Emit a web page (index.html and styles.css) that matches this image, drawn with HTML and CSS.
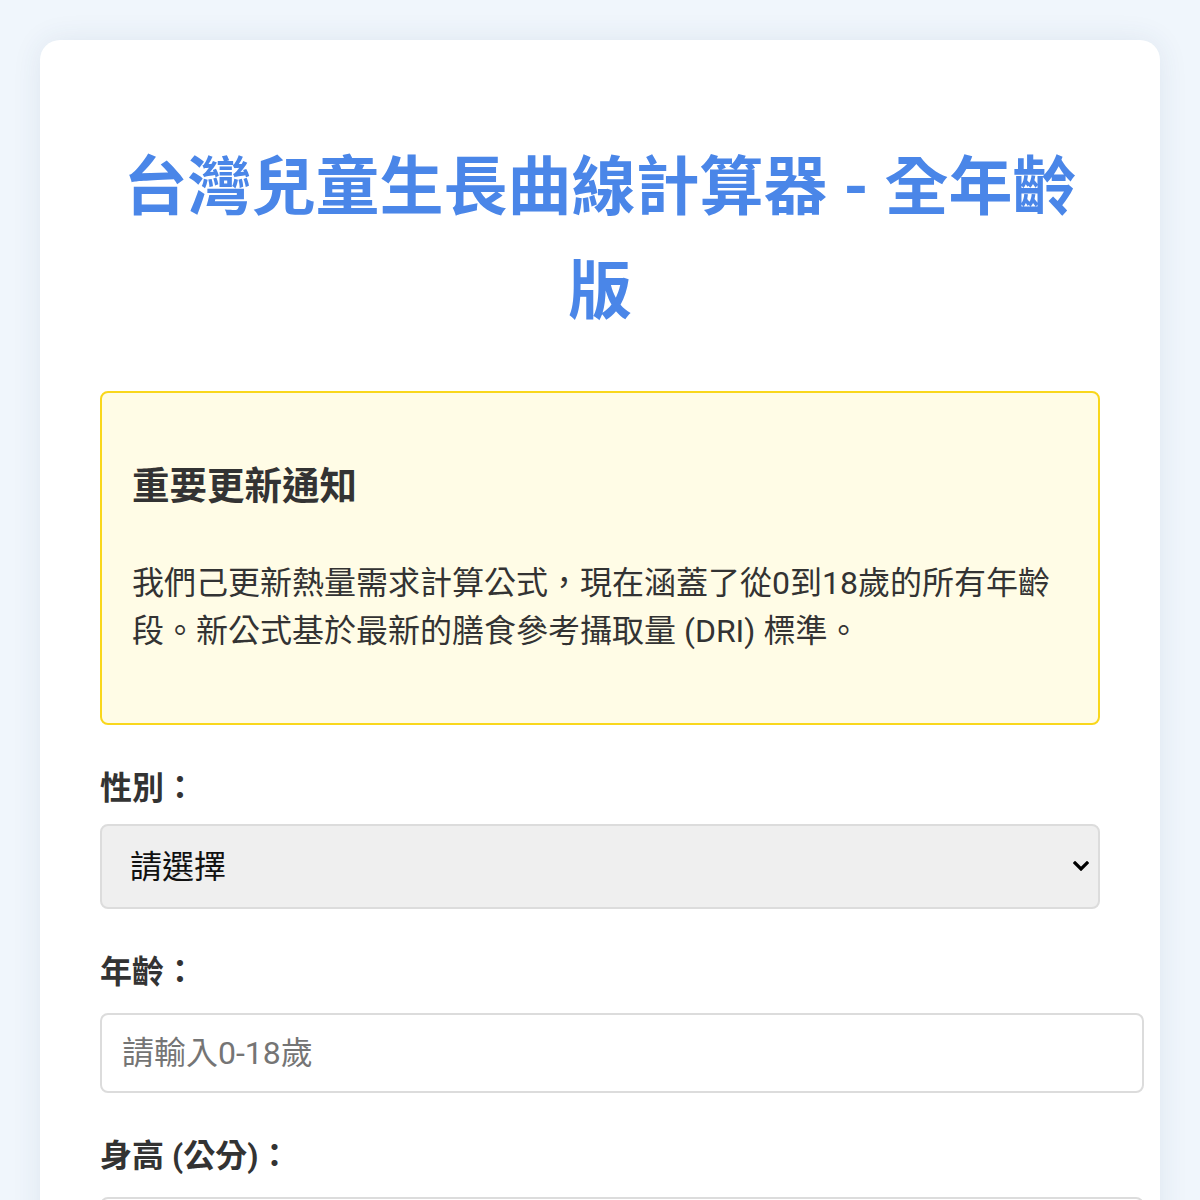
FILE: index.html
```html
<!DOCTYPE html>
<html lang="zh-Hant">
<head>
<meta charset="utf-8">
<title>台灣兒童生長曲線計算器 - 全年齡版</title>
<link rel="stylesheet" href="styles.css">
</head>
<body>
<div class="card">
  <h1 class="title">台灣兒童生長曲線計算器 - 全年齡版</h1>
  <div class="notice">
    <h3 class="notice-title">重要更新通知</h3>
    <p class="notice-text">我們己更新熱量需求計算公式，現在涵蓋了從0到18歲的所有年齡段。新公式基於最新的膳食參考攝取量 (DRI) 標準。</p>
  </div>
  <div class="group">
    <label class="label" for="gender">性別：</label>
    <div class="select-wrap">
      <select id="gender" class="select">
        <option>請選擇</option>
        <option>男</option>
        <option>女</option>
      </select>
      <svg class="chevron" width="16" height="10" viewBox="0 0 16 10"><path d="M2 2 L8 8 L14 2" fill="none" stroke="#000" stroke-width="3.2" stroke-linecap="square"/></svg>
    </div>
  </div>
  <div class="group">
    <label class="label" for="age">年齡：</label>
    <input id="age" class="input" type="text" placeholder="請輸入0-18歲">
  </div>
  <div class="group">
    <label class="label" for="height">身高 (公分)：</label>
    <input id="height" class="input" type="text" placeholder="請輸入身高">
  </div>
</div>
</body>
</html>
```
FILE: styles.css
```css
html, body {
  margin: 0;
  padding: 0;
}
body {
  background: #f0f6fc;
  padding: 40px;
  font-family: Roboto, "Noto Sans CJK JP", "Noto Sans CJK TC", sans-serif;
  color: #333;
}
.card {
  background: #fff;
  border-radius: 20px;
  box-shadow: 0 0 30px rgba(40, 70, 110, 0.09);
  padding: 60px;
  min-height: 1200px;
}
.title {
  margin: 36px 0 47px;
  font-size: 64px;
  line-height: 104px;
  font-weight: 700;
  color: #4a86e8;
  text-align: center;
}
.notice {
  background: #fffce6;
  border: 2px solid #f9d71c;
  border-radius: 8px;
  padding: 30px;
}
.notice-title {
  margin: 40px 0 50px;
  font-size: 37.5px;
  line-height: 46px;
  font-weight: 700;
  color: #333;
}
.notice-text {
  margin: 0 0 38px;
  font-size: 32px;
  line-height: 48px;
  color: #333;
}
.group {
  display: flex;
  flex-direction: column;
  align-items: flex-start;
  margin-top: 44px;
}
.label {
  display: block;
  font-size: 32px;
  line-height: 38px;
  font-weight: 700;
  color: #333;
  margin-bottom: 17px;
}
.select-wrap {
  position: relative;
  align-self: stretch;
}
.select {
  display: block;
  width: 100%;
  height: 85px;
  box-sizing: border-box;
  -webkit-appearance: none;
  appearance: none;
  background: #efefef;
  border: 2px solid #dcdcdc;
  border-radius: 8px;
  padding: 0 28px;
  font-family: inherit;
  font-size: 32px;
  color: #111;
  margin: 0;
}
.chevron {
  position: absolute;
  right: 11px;
  top: 37px;
}
.input {
  display: block;
  width: 1000px;
  height: 36px;
  padding: 20px;
  border: 2px solid #dcdcdc;
  border-radius: 8px;
  font-family: inherit;
  font-size: 32px;
  color: #333;
  margin: 5px 0 0;
}
.input::placeholder {
  color: #757575;
}
```
